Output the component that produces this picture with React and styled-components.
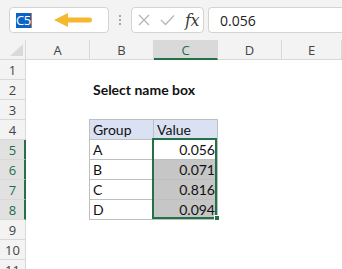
import React from "react";
import styled, { createGlobalStyle } from "styled-components";

const GlobalStyle = createGlobalStyle`
  html, body { margin: 0; padding: 0; background: #ffffff; overflow: hidden; }
  body { font-family: "Lato", "Liberation Sans", sans-serif; }
`;

const Page = styled.div`
  width: 342px;
  height: 269px;
  overflow: hidden;
  background: #ffffff;
`;

const TopBar = styled.div`
  height: 40px;
  box-sizing: border-box;
  background: #f3f3f3;
  display: flex;
  align-items: flex-start;
  padding: 7px 0 0 9px;
`;

const Box = styled.div`
  box-sizing: border-box;
  height: 26px;
  background: #ffffff;
  border: 1px solid #d4d4d4;
  border-radius: 4px;
  display: flex;
  align-items: center;
`;

const NameBox = styled(Box)`
  width: 100px;
  padding-left: 6px;
`;

const Selected = styled.span`
  display: inline-flex;
  align-items: center;
  justify-content: center;
  width: 15px;
  height: 15px;
  background: #0a64c8;
  color: #ffffff;
  font-family: "Open Sans", "Liberation Sans", sans-serif;
  font-size: 13px;
  letter-spacing: -0.3px;
`;

const Caret = styled.span`
  width: 1px;
  height: 15px;
  background: #e0762a;
`;

const ArrowWrap = styled.span`
  display: inline-flex;
  margin-left: 22px;
`;

const Dots = styled.div`
  width: 22px;
  height: 26px;
  display: flex;
  flex-direction: column;
  align-items: center;
  justify-content: center;
  gap: 2px;
  span {
    width: 2px;
    height: 2px;
    border-radius: 1px;
    background: #8c8c8c;
  }
`;

const ButtonsBox = styled(Box)`
  width: 73px;
  padding-left: 6px;
  gap: 0;
`;

const FxText = styled.span`
  font-family: "DejaVu Serif", "Liberation Serif", serif;
  font-style: italic;
  font-size: 16px;
  color: #3a3a3a;
  margin-left: 10px;
  letter-spacing: -0.5px;
`;

const FormulaBox = styled(Box)`
  flex: 1;
  margin-left: 4px;
  border-right: none;
  border-radius: 4px 0 0 4px;
  padding-left: 11px;
  font-family: "Open Sans", "Liberation Sans", sans-serif;
  font-size: 14px;
  color: #222222;
`;

const Sheet = styled.div`
  display: grid;
  grid-template-columns: 26px 64px 64px 64px 64px 1fr;
  grid-template-rows: 20px;
  grid-auto-rows: 20px;
`;

const Placed = styled.div`
  grid-row: ${(p) => p.$row};
  grid-column: ${(p) => p.$col};
  box-sizing: border-box;
  min-width: 0;
`;

const Corner = styled(Placed)`
  background: #f3f3f3;
  border-right: 1px solid #d8d8d8;
  border-bottom: 1px solid #d8d8d8;
  display: flex;
  align-items: flex-end;
  justify-content: flex-end;
  padding: 0 2px 3px 0;
`;

const HeaderFont = `
  font-family: "Open Sans", "Liberation Sans", sans-serif;
  font-size: 13px;
`;

const ColHeader = styled(Placed)`
  ${HeaderFont}
  background: ${(p) => (p.$selected ? "#d9d9d9" : "#f3f3f3")};
  color: ${(p) => (p.$selected ? "#1e6e48" : "#444444")};
  border-right: 1px solid #d8d8d8;
  border-bottom: ${(p) => (p.$selected ? "2px solid #217346" : "1px solid #d8d8d8")};
  display: flex;
  align-items: center;
  justify-content: center;
  padding-top: ${(p) => (p.$selected ? "1px" : "0")};
`;

const RowHeader = styled(Placed)`
  ${HeaderFont}
  background: ${(p) => (p.$selected ? "#e1e1e1" : "#f3f3f3")};
  color: ${(p) => (p.$selected ? "#1e6e48" : "#444444")};
  border-right: ${(p) => (p.$selected ? "2px solid #217346" : "1px solid #d8d8d8")};
  border-bottom: 1px solid #d8d8d8;
  display: flex;
  align-items: center;
  justify-content: center;
  padding-left: ${(p) => (p.$selected ? "1px" : "0")};
`;

const Title = styled(Placed)`
  display: flex;
  align-items: flex-end;
  padding: 0 0 2px 3px;
  font-size: 14px;
  line-height: 17px;
  font-weight: 700;
  color: #111111;
  white-space: nowrap;
  overflow: visible;
`;

const TableCell = styled(Placed)`
  margin: -1px 0 0 -1px;
  border: 1px solid #bfbfbf;
  background: ${(p) => (p.$head ? "#d9e1f2" : p.$fill ? "#c6c6c6" : "#ffffff")};
  display: flex;
  align-items: flex-end;
  justify-content: ${(p) => (p.$right ? "flex-end" : "flex-start")};
  padding: 0 2px 1px 3px;
  font-size: 14px;
  line-height: 17px;
  color: #111111;
  white-space: nowrap;
`;

const Selection = styled(Placed)`
  position: relative;
  z-index: 2;
  margin: -2px 1px 1px -2px;
  border: 2px solid #217346;
  pointer-events: none;
`;

const Handle = styled.div`
  position: absolute;
  right: -5px;
  bottom: -4px;
  width: 6px;
  height: 6px;
  box-sizing: border-box;
  background: #217346;
  border: 1px solid #ffffff;
`;

const COLS = ["A", "B", "C", "D", "E"];

const TABLE = [
  { row: 4, group: "Group", value: "Value", head: true },
  { row: 5, group: "A", value: "0.056" },
  { row: 6, group: "B", value: "0.071", fill: true },
  { row: 7, group: "C", value: "0.816", fill: true },
  { row: 8, group: "D", value: "0.094", fill: true },
];

const ROWS = Array.from({ length: 11 }, (_, i) => i + 1);

export default function App() {
  return (
    <Page>
      <GlobalStyle />
      <TopBar>
        <NameBox>
          <Selected>C5</Selected>
          <Caret />
          <ArrowWrap>
            <svg width="38" height="14" viewBox="0 0 38 14">
              <path d="M0 7 L14 0 L14 14 Z" fill="#f5b82e" />
              <line x1="12" y1="7" x2="35.5" y2="7" stroke="#f5b82e" strokeWidth="5" strokeLinecap="round" />
            </svg>
          </ArrowWrap>
        </NameBox>
        <Dots>
          <span />
          <span />
          <span />
        </Dots>
        <ButtonsBox>
          <svg width="12" height="12" viewBox="0 0 12 12">
            <path d="M1 1 L11 11 M11 1 L1 11" stroke="#b5b5b5" strokeWidth="1.3" fill="none" />
          </svg>
          <svg width="15" height="12" viewBox="0 0 15 12" style={{ marginLeft: 10 }}>
            <path d="M1 6 L5.5 10.5 L14 1.5" stroke="#b5b5b5" strokeWidth="1.3" fill="none" />
          </svg>
          <FxText>fx</FxText>
        </ButtonsBox>
        <FormulaBox>0.056</FormulaBox>
      </TopBar>
      <Sheet>
        <Corner $row={1} $col={1}>
          <svg width="13" height="12" viewBox="0 0 13 12">
            <path d="M13 0 L13 12 L0 12 Z" fill="#d9d9d9" />
          </svg>
        </Corner>
        {COLS.map((c, i) => (
          <ColHeader key={c} $row={1} $col={i + 2} $selected={c === "C"}>
            {c}
          </ColHeader>
        ))}
        {ROWS.map((r) => (
          <RowHeader key={r} $row={r + 1} $col={1} $selected={r >= 5 && r <= 8}>
            {r}
          </RowHeader>
        ))}
        <Title $row={3} $col={3}>Select name box</Title>
        {TABLE.map((t) => (
          <React.Fragment key={t.row}>
            <TableCell $row={t.row + 1} $col={3} $head={t.head}>
              {t.group}
            </TableCell>
            <TableCell $row={t.row + 1} $col={4} $head={t.head} $fill={t.fill} $right={!t.head}>
              {t.value}
            </TableCell>
          </React.Fragment>
        ))}
        <Selection $row="6 / span 4" $col={4}>
          <Handle />
        </Selection>
      </Sheet>
    </Page>
  );
}
